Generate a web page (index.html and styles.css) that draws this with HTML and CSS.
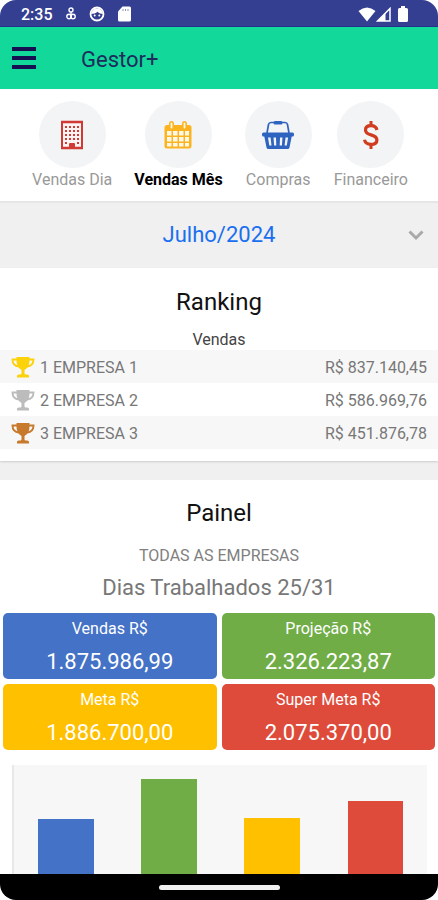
FILE: index.html
```html
<!DOCTYPE html>
<html lang="pt-BR">

<head>
	<meta charset="utf-8">
	<meta name="viewport" content="width=device-width, initial-scale=1.0">
	<title>Gestor+</title>
	<link rel="stylesheet" href="styles.css">
</head>

<body>
	<div class="app">
		<div class="status">
			<span class="hora">2:35</span>
			<svg width="10" height="14" viewBox="0 0 10 14" fill="none" stroke="#fff" stroke-width="1.4">
				<circle cx="5" cy="3" r="2" />
				<path d="M5 5v7" />
				<circle cx="3" cy="9.500" r="2.200" />
				<circle cx="7" cy="9.500" r="2.200" />
			</svg>
			<svg width="16" height="16" viewBox="0 0 16 16">
				<circle cx="8" cy="8" r="6.500" fill="none" stroke="#fff" stroke-width="1.800" />
				<path d="M2 8c1-4 3-5.500 6-5.500S13 4 14 8c-2 0-4-.7-5.500-2.200C7 7.300 4.500 8 2 8z" fill="#fff" />
				<circle cx="5.700" cy="9.500" r="1" fill="#fff" />
				<circle cx="10.300" cy="9.500" r="1" fill="#fff" />
			</svg>
			<svg width="13" height="16" viewBox="0 0 13 16">
				<path d="M4.500 0.500H11.500q1.500 0 1.500 1.500v12q0 1.500-1.500 1.500h-10Q0 15.500 0 14V5.500z" fill="#fff" />
				<path d="M5 3v2M7.500 3v2M10 3v2" stroke="#8c93c4" stroke-width="1" />
			</svg>
			<div class="sinal">
				<svg width="18" height="15" viewBox="0 0 18 15">
					<path d="M9 14.500L.5 4Q9-3 17.500 4z" fill="#fff" />
				</svg>
				<svg width="15" height="15" viewBox="0 0 15 15">
					<path d="M14 1.500V14H1.500z" fill="none" stroke="#fff" stroke-width="1.500" />
					<path d="M9.500 6v8H1.500z" fill="#fff" />
				</svg>
				<svg class="bateria" width="10" height="16" viewBox="0 0 10 16">
					<path d="M3 0h4v2h1.500Q10 2 10 3.500v11q0 1.500-1.500 1.500h-7Q0 16 0 14.500v-11Q0 2 1.500 2H3z" fill="#fff" />
				</svg>
			</div>
		</div>

		<header>
			<button class="hamburger" aria-label="Menu"><span></span><span></span><span></span></button>
			<h1>Gestor+</h1>
		</header>

		<main>
			<nav class="menu">
				<button>
					<span class="cirkel">
						<svg width="24" height="30" viewBox="0 0 24 30">
							<path d="M2 2h20v26H2z" fill="#faf3f3" stroke="#cf3a34" stroke-width="2" />
							<path d="M1 2h22M1 28h22" stroke="#cf3a34" stroke-width="2.600" />
							<path d="M6 6v18M10 6v14M14 6v14M18 6v18" stroke="#cf3a34" stroke-width="2" stroke-dasharray="2 2" />
							<path d="M9 28v-4q0-1 1-1h4q1 0 1 1v4z" fill="#cf3a34" />
						</svg>
					</span>
					Vendas Dia
				</button>
				<button class="valgt">
					<span class="cirkel">
						<svg width="28" height="30" viewBox="0 0 28 30">
							<path fill="#fbb420" d="M3 5h2V4Q5 1 7.500 1T10 4v1h8V4q0-3 2.500-3T23 4v1h2q2.500 0 2.500 2.500V26q0 2.500-2.500 2.500H3Q.5 28.500.5 26V7.500Q.5 5 3 5z" />
							<path fill="#fff8e6" d="M3 11h4.500v4.500H3zM9 11h4.500v4.500H9zM15 11h4.500v4.500H15zM21 11h4v4.500h-4zM3 17h4.500v4.500H3zM9 17h4.500v4.500H9zM15 17h4.500v4.500H15zM21 17h4v4.500h-4zM3 23h4.500v3.500H3zM9 23h4.500v3.500H9zM15 23h4.500v3.500H15zM21 23h4v3.500h-4z" />
							<path d="M7.500 3.500v4M20.500 3.500v4" stroke="#fff8e6" stroke-width="1.800" stroke-linecap="round" />
						</svg>
					</span>
					Vendas Mês
				</button>
				<button>
					<span class="cirkel">
						<svg width="32" height="30" viewBox="0 0 32 30">
							<path d="M5 13L6.500 4.500Q7 2.500 9 2.500h14Q25 2.500 25.500 4.500L27 13" fill="none" stroke="#2e64c0" stroke-width="1.700" />
							<rect x="11.500" y="1" width="9" height="3.600" rx="1.500" fill="#2e64c0" />
							<rect x="0" y="12.500" width="32" height="4" rx="1.500" fill="#2e64c0" />
							<path fill="#2e64c0" fill-rule="evenodd" d="M2 15h28l-2.500 12.500q-.4 1.500-2 1.500h-19q-1.600 0-2-1.500zM6 17.500l1.300 8h2.200l-.9-8zM11.500 17.500l.6 8h2.200l-.3-8zM18 17.500l-.3 8h2.200l.6-8zM23.500 17.500l-.9 8h2.200l1.300-8z" />
						</svg>
					</span>
					Compras
				</button>
				<button>
					<span class="cirkel">
						<svg width="18" height="30" viewBox="0 0 18 30" fill="none" stroke="#d03c20">
							<path d="M15 10C14.300 7.200 12.300 5.700 9 5.700 5.600 5.700 3.500 7.300 3.500 10c0 3 2.300 4 5.500 4.900 3.600 1 5.900 2.200 5.900 5 0 2.900-2.300 4.400-5.900 4.400-3.500 0-5.900-1.500-6.500-4.500" stroke-width="3.200" />
							<path d="M9 1v5M9 24v5" stroke-width="3" />
						</svg>
					</span>
					Financeiro
				</button>
			</nav>

			<div class="periodo">
				<select aria-label="Período">
					<option>Julho/2024</option>
				</select>
				<svg class="seta" width="16" height="12" viewBox="0 0 16 12">
					<path d="M1.500 2.500L8 9l6.500-6.500" fill="none" stroke="#a9a9a9" stroke-width="3" />
				</svg>
			</div>

			<section class="ranking">
				<h2>Ranking</h2>
				<table>
					<caption>Vendas</caption>
					<tr>
						<td class="icone"><svg class="ouro" width="24" height="22" viewBox="0 0 24 22"><use href="#trofeu" /></svg></td>
						<td>1 EMPRESA 1</td>
						<td class="valor">R$ 837.140,45</td>
					</tr>
					<tr>
						<td class="icone"><svg class="prata" width="24" height="22" viewBox="0 0 24 22"><use href="#trofeu" /></svg></td>
						<td>2 EMPRESA 2</td>
						<td class="valor">R$ 586.969,76</td>
					</tr>
					<tr>
						<td class="icone"><svg class="bronze" width="24" height="22" viewBox="0 0 24 22"><use href="#trofeu" /></svg></td>
						<td>3 EMPRESA 3</td>
						<td class="valor">R$ 451.876,78</td>
					</tr>
				</table>
			</section>

			<section class="painel">
				<h2>Painel</h2>
				<p class="empresas">TODAS AS EMPRESAS</p>
				<p class="dias">Dias Trabalhados 25/31</p>
				<div class="cards">
					<article class="azul">
						<h3>Vendas R$</h3>
						<p>1.875.986,99</p>
					</article>
					<article class="verde">
						<h3>Projeção R$</h3>
						<p>2.326.223,87</p>
					</article>
					<article class="amarelo">
						<h3>Meta R$</h3>
						<p>1.886.700,00</p>
					</article>
					<article class="vermelho">
						<h3>Super Meta R$</h3>
						<p>2.075.370,00</p>
					</article>
				</div>
				<div class="grafico">
					<div class="barra azul" style="height: 167px"></div>
					<div class="barra verde" style="height: 207px"></div>
					<div class="barra amarelo" style="height: 168px"></div>
					<div class="barra vermelho" style="height: 185px"></div>
				</div>
			</section>
		</main>

		<div class="navbar"><span></span></div>
	</div>

	<svg class="skjult" width="0" height="0">
		<symbol id="trofeu" viewBox="0 0 24 22">
			<path d="M6 3.500H1.500c0 4.500 2 6.500 6.500 7M18 3.500h4.500c0 4.500-2 6.500-6.500 7" fill="none" stroke="currentColor" stroke-width="1.900" />
			<path d="M5.500 1h13v3.500c0 4.500-1.500 7.500-5 9.500v3c0 1 .5 1.500 2 1.500 1.500 0 2.500.5 2.500 1.500v1.500H6V20c0-1 1-1.500 2.500-1.500s2-.5 2-1.500v-3C7 12 5.500 9 5.500 4.500z" fill="currentColor" />
		</symbol>
	</svg>
</body>

</html>
```
FILE: styles.css
```css
*,
body * {
	box-sizing: border-box;
}

body {
	margin: 0;
	padding: 0;
	background-color: #ffffff;
	font-family: Roboto, sans-serif;
}

h1,
h2,
h3,
p {
	margin: 0;
	font-weight: 400;
}

button {
	border: 0;
	padding: 0;
	background: none;
	font-family: inherit;
}

svg {
	display: block;
}

.app {
	display: flex;
	flex-direction: column;
	height: 100vh;
	border-radius: 16px;
	overflow: hidden;
}

.status {
	display: flex;
	align-items: center;
	gap: 13px;
	height: 27px;
	padding: 2px 30px 0 21px;
	background-color: #343f92;
	border-bottom: 1px solid #24308a;
	color: #ffffff;
	flex-shrink: 0;
}

.hora {
	font-size: 16px;
	font-weight: 500;
}

.sinal {
	display: flex;
	align-items: center;
	margin-left: auto;
}

.bateria {
	margin-left: 7px;
}

header {
	display: flex;
	align-items: center;
	gap: 45px;
	height: 62px;
	padding: 0 12px;
	background-color: #12d89a;
	flex-shrink: 0;
}

.hamburger {
	display: flex;
	flex-direction: column;
	gap: 5px;
	width: 24px;
}

.hamburger span {
	height: 4px;
	background-color: #161052;
}

h1 {
	padding-top: 3px;
	font-size: 22px;
	color: #1c2c5c;
}

main {
	flex: 1;
	min-height: 0;
	overflow-y: auto;
	scrollbar-width: none;
	background-color: #f0f0f0;
}

.menu {
	display: flex;
	justify-content: center;
	gap: 22px;
	height: 114px;
	padding: 12px 0 0 2px;
	background-color: #ffffff;
	border-bottom: 2px solid #e6e6e6;
}

.menu button {
	display: flex;
	flex-direction: column;
	align-items: center;
	font-size: 16px;
	line-height: 24px;
	color: #999999;
}

.menu .valgt {
	font-weight: 700;
	color: #000000;
}

.cirkel {
	display: grid;
	place-items: center;
	width: 67px;
	height: 67px;
	border-radius: 50%;
	background-color: #f2f4f5;
}

.periodo {
	position: relative;
	height: 65px;
}

.periodo select {
	appearance: none;
	width: 100%;
	height: 62px;
	border: 0;
	background: none;
	font-family: inherit;
	font-size: 22px;
	color: #1a6ff0;
	text-align: center;
	text-align-last: center;
}

.seta {
	position: absolute;
	right: 14px;
	top: 26px;
	pointer-events: none;
}

section {
	background-color: #ffffff;
}

h2 {
	font-size: 24px;
	line-height: 32px;
	color: #111111;
	text-align: center;
}

.ranking {
	padding: 18px 0 12px;
	margin-bottom: 19px;
	box-shadow: 0 1px 2px #cccccc;
}

table {
	width: 100%;
	border-collapse: collapse;
	font-size: 16px;
	color: #777777;
}

caption {
	padding-top: 12px;
	line-height: 20px;
	color: #444444;
}

td {
	height: 33px;
	padding: 2px 0 0;
}

tr:nth-child(odd) {
	background-color: #f7f7f7;
}

.icone {
	width: 40px;
	padding: 0 0 0 11px;
}

.valor {
	padding-right: 11px;
	text-align: right;
}

.ouro {
	color: #fcd20a;
}

.prata {
	color: #bcbcbc;
}

.bronze {
	color: #c87a2c;
}

.painel {
	padding-top: 17px;
	text-align: center;
}

.empresas {
	padding-top: 16px;
	font-size: 16px;
	line-height: 22px;
	color: #808080;
}

.dias {
	font-size: 22px;
	line-height: 42px;
	color: #777777;
}

.cards {
	display: grid;
	grid-template-columns: 1fr 1fr;
	gap: 5px;
	padding: 4px 3px 0;
}

.cards article {
	height: 66px;
	padding-top: 4px;
	border-radius: 5px;
	color: #ffffff;
}

h3 {
	font-size: 16px;
	line-height: 24px;
}

.cards p {
	padding-top: 4px;
	font-size: 22px;
	line-height: 34px;
}

.azul {
	background-color: #4472c6;
}

.verde {
	background-color: #70ad47;
}

.amarelo {
	background-color: #ffc000;
}

.vermelho {
	background-color: #de4b3a;
}

.grafico {
	display: grid;
	grid-template-columns: repeat(4, 1fr);
	align-items: end;
	justify-items: center;
	height: 221px;
	margin: 15px 11px 0 12px;
	border-left: 2px solid #e8e8e8;
	background-color: #f7f7f7;
}

.barra {
	width: 54%;
}

.navbar {
	display: grid;
	place-items: center;
	height: 26px;
	background-color: #000000;
	flex-shrink: 0;
}

.navbar span {
	width: 121px;
	height: 5px;
	border-radius: 3px;
	background-color: #f0f0f0;
}

.skjult {
	position: absolute;
}
```
